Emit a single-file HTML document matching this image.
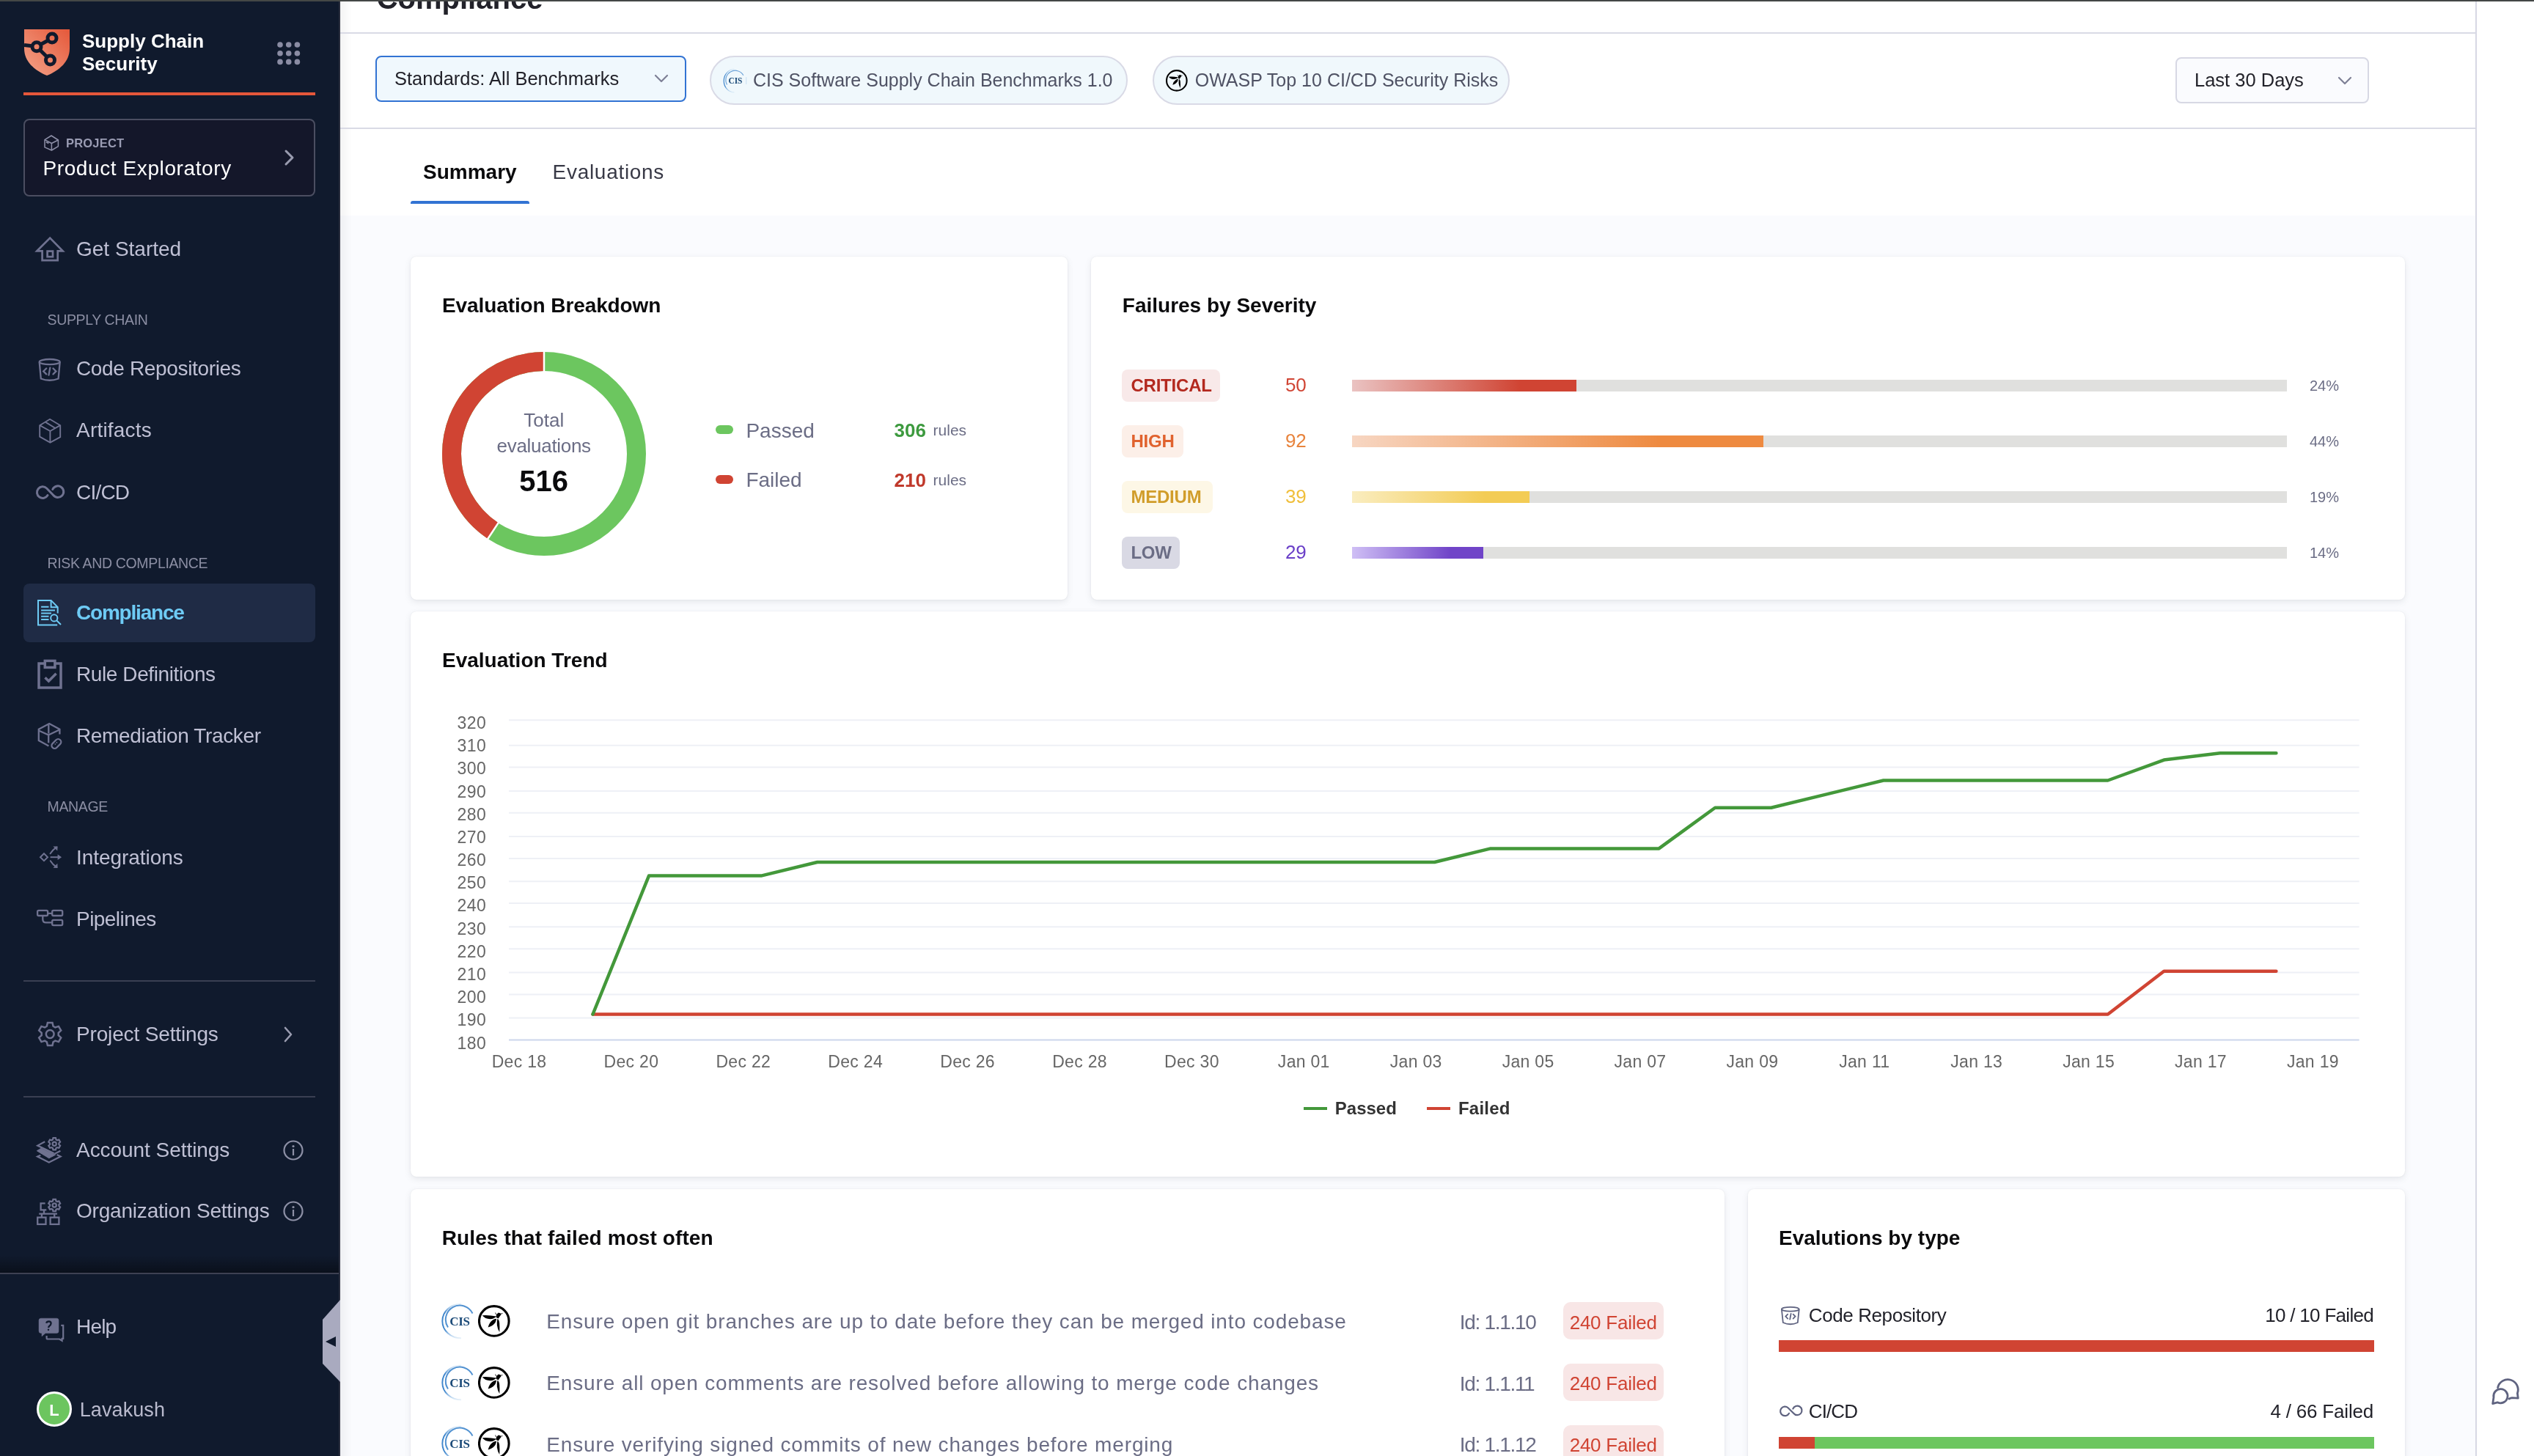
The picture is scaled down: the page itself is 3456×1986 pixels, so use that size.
<!DOCTYPE html>
<html><head><meta charset="utf-8"><title>Compliance</title>
<style>
html,body{margin:0;padding:0;}
body{width:3456px;height:1986px;overflow:hidden;position:relative;background:#ffffff;font-family:"Liberation Sans", sans-serif;}
#root{position:absolute;left:0;top:0;width:3456px;height:1986px;overflow:hidden;will-change:transform;}
</style></head><body><div id="root">
<div style="position:absolute;left:0px;top:0px;width:462px;height:1986px;background:#101a2d;"></div>
<div style="position:absolute;left:462px;top:0px;width:2px;height:1986px;background:#2a2e3e;"></div>
<svg style="position:absolute;left:33px;top:40px;" width="62" height="63" viewBox="0 0 62 63">
<defs><linearGradient id="lg" x1="1" y1="0" x2="0" y2="1">
<stop offset="0" stop-color="#e5583a"/><stop offset="1" stop-color="#f3a48a"/></linearGradient></defs>
<path d="M0 0 H62 V26 C62 44 48 56 31 63 C14 56 0 44 0 26 Z" fill="url(#lg)"/>
<g fill="none" stroke="#101a2d" stroke-width="5">
<circle cx="38" cy="12" r="6"/><circle cx="17" cy="23.7" r="6"/><circle cx="35.5" cy="42" r="6"/>
<line x1="32.8" y1="15" x2="22.2" y2="20.8"/><line x1="21.3" y1="28" x2="31" y2="37.5"/><line x1="0" y1="21.5" x2="11" y2="22.8"/>
</g></svg>
<div style="position:absolute;top:42.99px;font-size:26px;line-height:26px;color:#ffffff;font-weight:700;white-space:nowrap;font-family:'Liberation Sans', sans-serif;left:112px;">Supply Chain</div>
<div style="position:absolute;top:73.99px;font-size:26px;line-height:26px;color:#ffffff;font-weight:700;white-space:nowrap;font-family:'Liberation Sans', sans-serif;left:112px;">Security</div>
<svg style="position:absolute;left:378px;top:57px;" width="32" height="32" viewBox="0 0 32 32"><circle cx="4.0" cy="4.0" r="3.8" fill="#8a8ca3"/><circle cx="4.0" cy="15.7" r="3.8" fill="#8a8ca3"/><circle cx="4.0" cy="27.4" r="3.8" fill="#8a8ca3"/><circle cx="15.7" cy="4.0" r="3.8" fill="#8a8ca3"/><circle cx="15.7" cy="15.7" r="3.8" fill="#8a8ca3"/><circle cx="15.7" cy="27.4" r="3.8" fill="#8a8ca3"/><circle cx="27.4" cy="4.0" r="3.8" fill="#8a8ca3"/><circle cx="27.4" cy="15.7" r="3.8" fill="#8a8ca3"/><circle cx="27.4" cy="27.4" r="3.8" fill="#8a8ca3"/></svg>
<div style="position:absolute;left:32px;top:126px;width:398px;height:4px;background:#e5573a;"></div>
<div style="position:absolute;left:32px;top:162px;width:398px;height:106px;box-sizing:border-box;border:2px solid #4b4e61;border-radius:8px;background:#14172a;"></div>
<svg style="position:absolute;left:60px;top:184px;" width="22" height="23" viewBox="0 0 22 23"><g fill="none" stroke="#8e90a8" stroke-width="1.5" stroke-linejoin="round"><path d="M10 1 L19.4 7 V15.6 L10.4 21 L1 16.9 V6.6 Z"/><path d="M1 6.6 L10.4 11.5 L19.4 7 M10.4 11.5 V21"/><path d="M2.9 9.75 L6.4 11.4" stroke-width="1.8"/></g></svg>
<div style="position:absolute;top:187.03px;font-size:16.5px;line-height:16.5px;color:#9a9cb3;font-weight:700;white-space:nowrap;font-family:'Liberation Sans', sans-serif;letter-spacing:0.2px;left:90px;">PROJECT</div>
<div style="position:absolute;top:215.50px;font-size:28px;line-height:28px;color:#ffffff;font-weight:400;white-space:nowrap;font-family:'Liberation Sans', sans-serif;letter-spacing:0.6px;left:58.5px;">Product Exploratory</div>
<svg style="position:absolute;left:386px;top:203px;" width="18" height="24" viewBox="0 0 18 24"><path d="M4 3 L13 12 L4 21" fill="none" stroke="#9a9cb0" stroke-width="3" stroke-linecap="round" stroke-linejoin="round"/></svg>
<div style="position:absolute;top:325.80px;font-size:28px;line-height:28px;color:#bfc0d4;font-weight:400;white-space:nowrap;font-family:'Liberation Sans', sans-serif;left:104px;">Get Started</div>
<div style="position:absolute;top:427.49px;font-size:19.5px;line-height:19.5px;color:#8b8ea3;font-weight:400;white-space:nowrap;font-family:'Liberation Sans', sans-serif;letter-spacing:-0.35px;left:64.5px;">SUPPLY CHAIN</div>
<div style="position:absolute;top:489.30px;font-size:28px;line-height:28px;color:#bfc0d4;font-weight:400;white-space:nowrap;font-family:'Liberation Sans', sans-serif;letter-spacing:-0.35px;left:104px;">Code Repositories</div>
<div style="position:absolute;top:573.30px;font-size:28px;line-height:28px;color:#bfc0d4;font-weight:400;white-space:nowrap;font-family:'Liberation Sans', sans-serif;letter-spacing:0.2px;left:104px;">Artifacts</div>
<div style="position:absolute;top:658.30px;font-size:28px;line-height:28px;color:#bfc0d4;font-weight:400;white-space:nowrap;font-family:'Liberation Sans', sans-serif;letter-spacing:-0.8px;left:104px;">CI/CD</div>
<div style="position:absolute;top:759.49px;font-size:19.5px;line-height:19.5px;color:#8b8ea3;font-weight:400;white-space:nowrap;font-family:'Liberation Sans', sans-serif;letter-spacing:-0.35px;left:64.5px;">RISK AND COMPLIANCE</div>
<div style="position:absolute;left:32px;top:796px;width:398px;height:80px;background:#1f2b45;border-radius:8px;"></div>
<div style="position:absolute;top:822.30px;font-size:28px;line-height:28px;color:#6ecbf5;font-weight:700;white-space:nowrap;font-family:'Liberation Sans', sans-serif;letter-spacing:-1.2px;left:104px;">Compliance</div>
<div style="position:absolute;top:906.30px;font-size:28px;line-height:28px;color:#bfc0d4;font-weight:400;white-space:nowrap;font-family:'Liberation Sans', sans-serif;letter-spacing:-0.4px;left:104px;">Rule Definitions</div>
<div style="position:absolute;top:990.30px;font-size:28px;line-height:28px;color:#bfc0d4;font-weight:400;white-space:nowrap;font-family:'Liberation Sans', sans-serif;letter-spacing:-0.35px;left:104px;">Remediation Tracker</div>
<div style="position:absolute;top:1091.49px;font-size:19.5px;line-height:19.5px;color:#8b8ea3;font-weight:400;white-space:nowrap;font-family:'Liberation Sans', sans-serif;letter-spacing:-0.35px;left:64.5px;">MANAGE</div>
<div style="position:absolute;top:1155.80px;font-size:28px;line-height:28px;color:#bfc0d4;font-weight:400;white-space:nowrap;font-family:'Liberation Sans', sans-serif;letter-spacing:-0.05px;left:104px;">Integrations</div>
<div style="position:absolute;top:1239.90px;font-size:28px;line-height:28px;color:#bfc0d4;font-weight:400;white-space:nowrap;font-family:'Liberation Sans', sans-serif;letter-spacing:-0.55px;left:104px;">Pipelines</div>
<div style="position:absolute;left:32px;top:1337px;width:398px;height:2px;background:#3a3f52;"></div>
<div style="position:absolute;top:1397.30px;font-size:28px;line-height:28px;color:#bfc0d4;font-weight:400;white-space:nowrap;font-family:'Liberation Sans', sans-serif;letter-spacing:-0.15px;left:104px;">Project Settings</div>
<svg style="position:absolute;left:384px;top:1398px;" width="18" height="26" viewBox="0 0 18 26"><path d="M5 4 L13 13 L5 22" fill="none" stroke="#9a9cb0" stroke-width="2.6" stroke-linecap="round" stroke-linejoin="round"/></svg>
<div style="position:absolute;left:32px;top:1495px;width:398px;height:2px;background:#3a3f52;"></div>
<div style="position:absolute;top:1555.30px;font-size:28px;line-height:28px;color:#bfc0d4;font-weight:400;white-space:nowrap;font-family:'Liberation Sans', sans-serif;letter-spacing:-0.05px;left:104px;">Account Settings</div>
<div style="position:absolute;top:1638.30px;font-size:28px;line-height:28px;color:#bfc0d4;font-weight:400;white-space:nowrap;font-family:'Liberation Sans', sans-serif;letter-spacing:-0.2px;left:104px;">Organization Settings</div>
<svg style="position:absolute;left:385px;top:1554px;" width="30" height="30" viewBox="0 0 30 30"><circle cx="15" cy="15" r="12.5" fill="none" stroke="#8d90a6" stroke-width="2.2"/><circle cx="15" cy="9.5" r="1.6" fill="#8d90a6"/><rect x="13.9" y="13" width="2.2" height="9" fill="#8d90a6"/></svg>
<svg style="position:absolute;left:385px;top:1637px;" width="30" height="30" viewBox="0 0 30 30"><circle cx="15" cy="15" r="12.5" fill="none" stroke="#8d90a6" stroke-width="2.2"/><circle cx="15" cy="9.5" r="1.6" fill="#8d90a6"/><rect x="13.9" y="13" width="2.2" height="9" fill="#8d90a6"/></svg>
<div style="position:absolute;left:0px;top:1712px;width:462px;height:24px;background:linear-gradient(180deg,rgba(0,0,0,0),rgba(0,0,0,0.4));"></div>
<div style="position:absolute;left:0px;top:1736px;width:462px;height:2px;background:#3d4152;"></div>
<div style="position:absolute;top:1795.80px;font-size:28px;line-height:28px;color:#bfc0d4;font-weight:400;white-space:nowrap;font-family:'Liberation Sans', sans-serif;letter-spacing:-0.8px;left:104px;">Help</div>
<div style="position:absolute;left:50px;top:1898px;width:48px;height:48px;box-sizing:border-box;border:3.5px solid #ffffff;border-radius:50%;background:#6cc55f;"></div>
<div style="position:absolute;top:1913.38px;font-size:22px;line-height:22px;color:#ffffff;font-weight:700;white-space:nowrap;font-family:'Liberation Sans', sans-serif;left:-926px;width:2000px;text-align:center;">L</div>
<div style="position:absolute;top:1909.64px;font-size:27px;line-height:27px;color:#b9bacd;font-weight:400;white-space:nowrap;font-family:'Liberation Sans', sans-serif;letter-spacing:0.1px;left:108.7px;">Lavakush</div>
<svg style="position:absolute;left:440px;top:1773px;" width="24" height="112" viewBox="0 0 24 112"><path d="M24 0 L0 27 V87 L24 112 Z" fill="#a9aabf"/><path d="M4 57 L18 50 V64 Z" fill="#101a2d"/></svg>
<svg style="position:absolute;left:40px;top:310px;" width="60" height="60" viewBox="0 0 60 60"><g fill="none" stroke="#6f7290" stroke-width="2.7" stroke-linejoin="miter" stroke-linecap="butt"><path d="M10.5 32.3 L28.2 14.6 L45.6 32.3 H38.7 V45.2 H17.6 V32.3 Z"/><rect x="24.6" y="32.6" width="7.4" height="7.6"/></g></svg>
<svg style="position:absolute;left:40px;top:475px;" width="60" height="60" viewBox="0 0 60 60"><g fill="none" stroke="#6f7290" stroke-width="2.3" stroke-linejoin="miter" stroke-linecap="butt"><ellipse cx="27.7" cy="18.6" rx="14" ry="3.6"/><path d="M13.7 18.8 L15.8 41.5 Q27.6 46 39.6 41.5 L41.7 18.8"/><path d="M23.2 27.5 L19.2 31.4 L23.2 35.4 M32.5 27.5 L36.4 31.4 L32.5 35.4 M28.3 26.6 L26.5 36.6" stroke-linecap="round"/></g></svg>
<svg style="position:absolute;left:40px;top:560px;" width="60" height="60" viewBox="0 0 60 60"><g fill="none" stroke="#6f7290" stroke-width="1.9" stroke-linejoin="miter" stroke-linecap="butt"><path d="M28 11.8 L42.2 20.2 V36.2 L28.4 43.6 L14.2 35.6 V20.2 Z"/><path d="M14.2 20.2 L28.4 28 L42.2 20.2 M28.4 28 V43.6 M22.2 15.9 L35.8 24.3"/></g></svg>
<svg style="position:absolute;left:40px;top:645px;" width="60" height="60" viewBox="0 0 60 60"><g fill="none" stroke="#6f7290" stroke-width="3" stroke-linejoin="miter" stroke-linecap="butt"><path d="M25 30.5 A7.8 7.8 0 1 1 23.6 21 L32.8 30.5 A7.8 7.8 0 1 0 31.8 22.5" stroke-linecap="round"/></g></svg>
<svg style="position:absolute;left:40px;top:800px;" width="60" height="60" viewBox="0 0 60 60"><g fill="none" stroke="#6ecbf5" stroke-width="2" stroke-linejoin="miter" stroke-linecap="butt"><path d="M38.2 52.6 H12 V18.9 H29.6 L38.7 28.2 V36.6"/><path d="M29.6 18.9 V28.2 H38.7"/><path d="M16.1 27.8 H26.5 M16.1 32.5 H35 M16.1 36.6 H30 M16.1 40.7 H26.5 M16.1 45.1 H26.5"/><circle cx="33.8" cy="42.9" r="4.6"/><path d="M37.2 46.3 L43 52"/></g></svg>
<svg style="position:absolute;left:40px;top:895px;" width="60" height="60" viewBox="0 0 60 60"><g fill="none" stroke="#6f7290" stroke-width="3.5" stroke-linejoin="miter" stroke-linecap="butt"><path d="M20 10 H13 V43 H43 V10 H36"/><rect x="21.3" y="6.4" width="13.6" height="9"/><path d="M21.5 29.2 L26.4 34 L36.6 23.8"/></g></svg>
<svg style="position:absolute;left:40px;top:975px;" width="60" height="60" viewBox="0 0 60 60"><g fill="none" stroke="#6f7290" stroke-width="2.3" stroke-linejoin="miter" stroke-linecap="butt"><path d="M26.4 42.4 L12.8 35 V19.8 L27.2 12 L41.4 19.8 V26.5"/><path d="M12.8 21.5 L26.2 27.6 L41.4 20.2 M26.3 13.2 V25.6 M26.2 27.6 V38.2"/><rect x="29.5" y="35.5" width="14.8" height="8" rx="4" transform="rotate(-45 36.9 39.5)"/><path d="M34.8 40.5 L35.8 39.5 M36.9 38.4 L37.9 37.4" stroke-width="1.6"/></g></svg>
<svg style="position:absolute;left:40px;top:1140px;" width="60" height="60" viewBox="0 0 60 60"><g fill="none" stroke="#6f7290" stroke-width="2" stroke-linejoin="miter" stroke-linecap="butt"><path d="M20 24.2 L25 29.2 L20 34.2 L15 29.2 Z"/><path d="M28.6 29.2 H41" /><path d="M28.6 24.3 Q32 19 37 15.6 M28.8 34.2 Q32 39.5 37 42.6" stroke-linecap="round"/></g></svg>
<svg style="position:absolute;left:40px;top:1140px;" width="60" height="60" viewBox="0 0 60 60"><g fill="#6f7290" stroke="#6f7290" stroke-width="1.2" stroke-linejoin="miter" stroke-linecap="butt"><path d="M39.2 26.6 L43 29.2 L39.2 31.8 Z M33.8 15.1 L38 15 L37.7 19.1 Z M33.8 43.2 L38 43.4 L37.8 39.1 Z"/></g></svg>
<svg style="position:absolute;left:40px;top:1225px;" width="60" height="60" viewBox="0 0 60 60"><g fill="none" stroke="#6f7290" stroke-width="2.3" stroke-linejoin="miter" stroke-linecap="butt"><rect x="11.1" y="16.8" width="14" height="7.2" rx="1.6"/><rect x="31.2" y="16.8" width="14" height="7.2" rx="1.6"/><rect x="31.2" y="29.9" width="14" height="7.2" rx="1.6"/><path d="M25.1 20.8 H31.2 M18.3 24 V29 Q18.3 33.4 22.7 33.4 H31.2"/></g></svg>
<svg style="position:absolute;left:40px;top:1380px;" width="60" height="60" viewBox="0 0 60 60"><g fill="none" stroke="#6f7290" stroke-width="2.5" stroke-linejoin="miter" stroke-linecap="butt"><path d="M23.85 19.74 L24.91 15.05 L31.49 15.05 L32.55 19.74 L35.34 21.36 L39.94 19.93 L43.23 25.62 L39.69 28.89 L39.69 32.11 L43.23 35.38 L39.94 41.07 L35.34 39.64 L32.55 41.26 L31.49 45.95 L24.91 45.95 L23.85 41.26 L21.06 39.64 L16.46 41.07 L13.17 35.38 L16.71 32.11 L16.71 28.89 L13.17 25.62 L16.46 19.93 L21.06 21.36 Z"/><circle cx="28.2" cy="30.5" r="5.4"/></g></svg>
<svg style="position:absolute;left:40px;top:1540px;" width="60" height="60" viewBox="0 0 60 60"><g fill="none" stroke="#6f7290" stroke-width="2.2" stroke-linejoin="miter" stroke-linecap="butt"><path d="M21.4 17.3 L10.8 22.7 L26.8 30.3 L42.5 22.4" stroke="none"/><path d="M21.2 17.2 L11.2 22.6 L33.8 33.2"/><path d="M42.4 29.7 L34.2 34"/><path d="M15.3 35.7 L11 37.6 L26.8 45.6 L42.6 37.6 L37.6 35.1"/><path d="M31.88 14.45 L32.47 12.08 L35.93 12.08 L36.52 14.45 L38.02 15.31 L40.37 14.65 L42.09 17.64 L40.34 19.34 L40.34 21.06 L42.09 22.76 L40.37 25.75 L38.02 25.09 L36.52 25.95 L35.93 28.32 L32.47 28.32 L31.88 25.95 L30.38 25.09 L28.03 25.75 L26.31 22.76 L28.06 21.06 L28.06 19.34 L26.31 17.64 L28.03 14.65 L30.38 15.31 Z"/><circle cx="34.2" cy="20.2" r="2.6"/></g></svg>
<svg style="position:absolute;left:40px;top:1540px;" width="60" height="60" viewBox="0 0 60 60"><g fill="#6f7290" stroke="#6f7290" stroke-width="1" stroke-linejoin="miter" stroke-linecap="butt"><path d="M10.3 29.7 L16 26.4 L35.6 35.2 L26.8 39.8 Z"/></g></svg>
<svg style="position:absolute;left:40px;top:1625px;" width="60" height="60" viewBox="0 0 60 60"><g fill="none" stroke="#6f7290" stroke-width="2.3" stroke-linejoin="miter" stroke-linecap="butt"><path d="M21.6 16.3 H15.6 V25.3 H23.3 M20 25.3 V30.7 M13.2 30.7 H38 M16.9 30.7 V35.6 M34.2 30.7 V35.6"/><rect x="11.2" y="35.6" width="11.3" height="9.3"/><rect x="28.6" y="35.6" width="11.8" height="9.3"/><path d="M31.88 13.25 L32.47 10.88 L35.93 10.88 L36.52 13.25 L38.02 14.11 L40.37 13.45 L42.09 16.44 L40.34 18.14 L40.34 19.86 L42.09 21.56 L40.37 24.55 L38.02 23.89 L36.52 24.75 L35.93 27.12 L32.47 27.12 L31.88 24.75 L30.38 23.89 L28.03 24.55 L26.31 21.56 L28.06 19.86 L28.06 18.14 L26.31 16.44 L28.03 13.45 L30.38 14.11 Z"/><circle cx="34.2" cy="19" r="2.6"/></g></svg>
<svg style="position:absolute;left:40px;top:1785px;" width="60" height="60" viewBox="0 0 60 60"><g fill="#6f7290" stroke="#6f7290" stroke-width="0.5" stroke-linejoin="miter" stroke-linecap="butt"><path d="M16 13.2 H37.4 Q40 13.2 40 15.8 V30.8 Q40 33.4 37.4 33.4 H22 L17 37.8 V33.4 H16 Q13 33.4 13 30.4 V16 Q13 13.2 16 13.2 Z"/></g></svg>
<svg style="position:absolute;left:40px;top:1785px;" width="60" height="60" viewBox="0 0 60 60"><g fill="none" stroke="#101a2d" stroke-width="2.3" stroke-linejoin="miter" stroke-linecap="butt"><path d="M23.2 19.8 Q23.8 17.4 26.6 17.4 Q29.6 17.6 29.6 20.2 Q29.4 22.2 27.4 23.6 Q26.2 24.6 26.2 26" fill="none" stroke-width="2.3"/><circle cx="26" cy="28.8" r="1.2" fill="#101a2d" stroke="none"/></g></svg>
<svg style="position:absolute;left:40px;top:1785px;" width="60" height="60" viewBox="0 0 60 60"><g fill="none" stroke="#6f7290" stroke-width="2.2" stroke-linejoin="miter" stroke-linecap="butt"><path d="M43.3 22.9 H46.2 V40.8 H44.6 V43.8 L41 41.5 H25 Q23.6 41.5 23.6 40 V37" /></g></svg>
<div style="position:absolute;left:464px;top:0px;width:2912px;height:294px;background:#ffffff;"></div>
<div style="position:absolute;left:464px;top:294px;width:2912px;height:1692px;background:#fafbfe;"></div>
<div style="position:absolute;left:464px;top:0px;width:16px;height:1986px;background:linear-gradient(90deg,rgba(0,0,0,0.045),rgba(0,0,0,0));"></div>
<div style="position:absolute;left:3376px;top:0px;width:2px;height:1986px;background:#d7d8e4;"></div>
<div style="position:absolute;left:3378px;top:0px;width:78px;height:1986px;background:#ffffff;"></div>
<div style="position:absolute;top:-22.16px;font-size:40px;line-height:40px;color:#22222a;font-weight:700;white-space:nowrap;font-family:'Liberation Sans', sans-serif;left:513.7px;">Compliance</div>
<div style="position:absolute;left:464px;top:44px;width:2912px;height:2px;background:#d9dae5;"></div>
<div style="position:absolute;left:464px;top:174px;width:2912px;height:2px;background:#d9dae5;"></div>
<div style="position:absolute;left:512px;top:76px;width:424px;height:63px;box-sizing:border-box;border:2px solid #3273d3;border-radius:8px;background:#f0f8fd;"></div>
<div style="position:absolute;top:95.41px;font-size:25.5px;line-height:25.5px;color:#22222a;font-weight:400;white-space:nowrap;font-family:'Liberation Sans', sans-serif;left:538px;">Standards: All Benchmarks</div>
<svg style="position:absolute;left:890px;top:98px;" width="24" height="18" viewBox="0 0 24 18"><path d="M4 5 L12 13 L20 5" fill="none" stroke="#7d7f95" stroke-width="2.2" stroke-linecap="round" stroke-linejoin="round"/></svg>
<div style="position:absolute;left:968px;top:76px;width:570px;height:67px;box-sizing:border-box;border:2px solid #d9dae6;border-radius:34px;background:#f0f8fc;"></div>
<svg style="position:absolute;left:984px;top:93.5px;overflow:visible" width="32.8" height="32.8" viewBox="0 0 50 50"><defs>
<linearGradient id="cg98493" x1="0" y1="0" x2="0" y2="1">
<stop offset="0" stop-color="#7fb3e3" stop-opacity="0.2"/><stop offset="0.25" stop-color="#3f86cc"/><stop offset="0.75" stop-color="#3f86cc"/><stop offset="1" stop-color="#7fb3e3" stop-opacity="0.2"/></linearGradient></defs>
<path d="M26.5 0.6 A21.6 24.1 0 0 0 26.5 48.8" fill="none" stroke="url(#cg98493)" stroke-width="1.8"/><path d="M45.5 13.3 A18.4 18.4 0 1 0 11.5 32.7" fill="none" stroke="#3f86cc" stroke-width="1.8" stroke-opacity="0.75"/><path d="M51.5 17 V32" stroke="#9cc4ea" stroke-width="1.2" stroke-opacity="0.6"/><text x="14.6" y="30.8" font-family="Liberation Serif, serif" font-weight="700" font-size="17.5" fill="#1b4a78" letter-spacing="-0.2">CIS</text></svg>
<div style="position:absolute;top:97.24px;font-size:25px;line-height:25px;color:#4f5264;font-weight:400;white-space:nowrap;font-family:'Liberation Sans', sans-serif;left:1027px;">CIS Software Supply Chain Benchmarks 1.0</div>
<div style="position:absolute;left:1571.5px;top:76px;width:487.5px;height:67px;box-sizing:border-box;border:2px solid #d9dae6;border-radius:34px;background:#f0f8fc;"></div>
<svg style="position:absolute;left:1590px;top:95px" width="29.9" height="29.9" viewBox="0 0 44 44"><circle cx="21.8" cy="21.9" r="20.3" fill="none" stroke="#000" stroke-width="3.1"/>
<path d="M5.8 14.2 Q15 13.6 25 15.6 Q22 19.2 16.5 19.2 Q9.5 19 5.8 14.2 Z" fill="#000"/>
<path d="M13.6 30.4 Q15.5 23.5 20 20.6 Q23 18.6 25 18.9 Q24.5 24 20.5 27.2 Q17 30 13.6 30.4 Z" fill="#000"/>
<path d="M26.4 18.8 Q28.6 19.5 29.2 25 Q29.6 31 29.3 37 Q26.6 33 25.9 27.5 Q25.6 22 26.4 18.8 Z" fill="#000"/>
<path d="M24.5 16.8 L25 13 L27.8 10.4 L30.5 11.2 L31.6 13 L29.6 15.4 L27.6 18.6 Z" fill="#000"/>
<path d="M24.5 13 L23.6 10.5 M31 12 L33.5 11.6" stroke="#000" stroke-width="0.8"/></svg>
<div style="position:absolute;top:97.24px;font-size:25px;line-height:25px;color:#4f5264;font-weight:400;white-space:nowrap;font-family:'Liberation Sans', sans-serif;left:1629.7px;">OWASP Top 10 CI/CD Security Risks</div>
<div style="position:absolute;left:2967px;top:78px;width:264px;height:63px;box-sizing:border-box;border:2px solid #d7d8e4;border-radius:8px;background:#fafbfe;"></div>
<div style="position:absolute;top:97.01px;font-size:25.5px;line-height:25.5px;color:#22222a;font-weight:400;white-space:nowrap;font-family:'Liberation Sans', sans-serif;left:2993px;">Last 30 Days</div>
<svg style="position:absolute;left:3186px;top:101px;" width="24" height="18" viewBox="0 0 24 18"><path d="M4 5 L12 13 L20 5" fill="none" stroke="#7d7f95" stroke-width="2.2" stroke-linecap="round" stroke-linejoin="round"/></svg>
<div style="position:absolute;top:221.00px;font-size:28px;line-height:28px;color:#0b0b0d;font-weight:700;white-space:nowrap;font-family:'Liberation Sans', sans-serif;left:577px;">Summary</div>
<div style="position:absolute;top:221.00px;font-size:28px;line-height:28px;color:#383946;font-weight:400;white-space:nowrap;font-family:'Liberation Sans', sans-serif;letter-spacing:0.7px;left:753.6px;">Evaluations</div>
<div style="position:absolute;left:560px;top:274px;width:162px;height:4px;background:#3273d3;border-radius:3px 3px 0 0;"></div>
<div style="position:absolute;left:560px;top:350px;width:896px;height:468px;background:#ffffff;border-radius:8px;box-shadow:0 0 1.5px rgba(40,41,61,0.10),0 3px 9px rgba(96,97,112,0.13);"></div>
<div style="position:absolute;left:1488px;top:350px;width:1792px;height:468px;background:#ffffff;border-radius:8px;box-shadow:0 0 1.5px rgba(40,41,61,0.10),0 3px 9px rgba(96,97,112,0.13);"></div>
<div style="position:absolute;left:560px;top:834px;width:2720px;height:771px;background:#ffffff;border-radius:8px;box-shadow:0 0 1.5px rgba(40,41,61,0.10),0 3px 9px rgba(96,97,112,0.13);"></div>
<div style="position:absolute;left:560px;top:1622px;width:1792px;height:500px;background:#ffffff;border-radius:8px;box-shadow:0 0 1.5px rgba(40,41,61,0.10),0 3px 9px rgba(96,97,112,0.13);"></div>
<div style="position:absolute;left:2384px;top:1622px;width:896px;height:500px;background:#ffffff;border-radius:8px;box-shadow:0 0 1.5px rgba(40,41,61,0.10),0 3px 9px rgba(96,97,112,0.13);"></div>
<div style="position:absolute;top:403.30px;font-size:28px;line-height:28px;color:#0b0b0d;font-weight:700;white-space:nowrap;font-family:'Liberation Sans', sans-serif;letter-spacing:-0.1px;left:603px;">Evaluation Breakdown</div>
<svg style="position:absolute;left:601.7px;top:479px" width="280" height="280" viewBox="0 0 280 280">
<g transform="rotate(-90 140 140)">
<circle cx="140" cy="140" r="126" fill="none" stroke="#6cc65f" stroke-width="26"/>
<circle cx="140" cy="140" r="126" fill="none" stroke="#d04433" stroke-width="26" stroke-dasharray="322.20 791.68" transform="scale(1,-1) translate(0,-280)"/>
</g>
<line x1="140" y1="0" x2="140" y2="28" stroke="#fff" stroke-width="2.5"/>
<line x1="140" y1="140" x2="62.75" y2="256.76" stroke="#fff" stroke-width="2.5" stroke-dasharray="0 112 30"/>
</svg>
<div style="position:absolute;top:559.99px;font-size:26px;line-height:26px;color:#6b6d85;font-weight:400;white-space:nowrap;font-family:'Liberation Sans', sans-serif;left:-258.29999999999995px;width:2000px;text-align:center;">Total</div>
<div style="position:absolute;top:595.49px;font-size:26px;line-height:26px;color:#6b6d85;font-weight:400;white-space:nowrap;font-family:'Liberation Sans', sans-serif;letter-spacing:-0.3px;left:-258.29999999999995px;width:2000px;text-align:center;">evaluations</div>
<div style="position:absolute;top:635.64px;font-size:40px;line-height:40px;color:#0b0b0d;font-weight:700;white-space:nowrap;font-family:'Liberation Sans', sans-serif;left:-258.29999999999995px;width:2000px;text-align:center;">516</div>
<div style="position:absolute;left:976px;top:580px;width:24px;height:12px;background:#6cc65f;border-radius:6px;"></div>
<div style="position:absolute;left:976px;top:648px;width:24px;height:12px;background:#d04433;border-radius:6px;"></div>
<div style="position:absolute;top:573.50px;font-size:28px;line-height:28px;color:#6b6d85;font-weight:400;white-space:nowrap;font-family:'Liberation Sans', sans-serif;left:1017.4px;">Passed</div>
<div style="position:absolute;top:641.10px;font-size:28px;line-height:28px;color:#6b6d85;font-weight:400;white-space:nowrap;font-family:'Liberation Sans', sans-serif;left:1017.4px;">Failed</div>
<div style="position:absolute;top:574.39px;font-size:26px;line-height:26px;color:#3d9a3f;font-weight:700;white-space:nowrap;font-family:'Liberation Sans', sans-serif;right:2193px;text-align:right;">306</div>
<div style="position:absolute;top:641.99px;font-size:26px;line-height:26px;color:#c0392b;font-weight:700;white-space:nowrap;font-family:'Liberation Sans', sans-serif;right:2193px;text-align:right;">210</div>
<div style="position:absolute;top:576.22px;font-size:21px;line-height:21px;color:#6b6d85;font-weight:400;white-space:nowrap;font-family:'Liberation Sans', sans-serif;left:1272.6px;">rules</div>
<div style="position:absolute;top:643.82px;font-size:21px;line-height:21px;color:#6b6d85;font-weight:400;white-space:nowrap;font-family:'Liberation Sans', sans-serif;left:1272.6px;">rules</div>
<div style="position:absolute;top:403.30px;font-size:28px;line-height:28px;color:#0b0b0d;font-weight:700;white-space:nowrap;font-family:'Liberation Sans', sans-serif;left:1530.8px;">Failures by Severity</div>
<div style="position:absolute;left:1530px;top:504px;width:134.4px;height:44px;background:#f8e9e9;border-radius:8px;"></div>
<div style="position:absolute;top:514.18px;font-size:24px;line-height:24px;color:#b3291f;font-weight:700;white-space:nowrap;font-family:'Liberation Sans', sans-serif;letter-spacing:-0.2px;left:1542.4px;">CRITICAL</div>
<div style="position:absolute;top:512.49px;font-size:26px;line-height:26px;color:#d04433;font-weight:400;white-space:nowrap;font-family:'Liberation Sans', sans-serif;letter-spacing:-0.3px;left:1753px;">50</div>
<div style="position:absolute;left:1844px;top:518px;width:1275px;height:16px;background:#e0e0de;"></div>
<div style="position:absolute;left:1844px;top:518px;width:306px;height:16px;background:linear-gradient(90deg,#eac3c2,#d04433 75%,#d04433);"></div>
<div style="position:absolute;top:516.07px;font-size:20px;line-height:20px;color:#6b6d85;font-weight:400;white-space:nowrap;font-family:'Liberation Sans', sans-serif;left:3150px;">24%</div>
<div style="position:absolute;left:1530px;top:580px;width:83.6px;height:44px;background:#fcefe8;border-radius:8px;"></div>
<div style="position:absolute;top:590.18px;font-size:24px;line-height:24px;color:#e0622e;font-weight:700;white-space:nowrap;font-family:'Liberation Sans', sans-serif;letter-spacing:-0.2px;left:1542.4px;">HIGH</div>
<div style="position:absolute;top:588.49px;font-size:26px;line-height:26px;color:#e8843d;font-weight:400;white-space:nowrap;font-family:'Liberation Sans', sans-serif;letter-spacing:-0.3px;left:1753px;">92</div>
<div style="position:absolute;left:1844px;top:594px;width:1275px;height:16px;background:#e0e0de;"></div>
<div style="position:absolute;left:1844px;top:594px;width:561px;height:16px;background:linear-gradient(90deg,#f7d6c2,#ee8a40 75%,#ee8a40);"></div>
<div style="position:absolute;top:592.07px;font-size:20px;line-height:20px;color:#6b6d85;font-weight:400;white-space:nowrap;font-family:'Liberation Sans', sans-serif;left:3150px;">44%</div>
<div style="position:absolute;left:1530px;top:656px;width:123.5px;height:44px;background:#fdf7e6;border-radius:8px;"></div>
<div style="position:absolute;top:666.18px;font-size:24px;line-height:24px;color:#d19d2b;font-weight:700;white-space:nowrap;font-family:'Liberation Sans', sans-serif;letter-spacing:-0.2px;left:1542.4px;">MEDIUM</div>
<div style="position:absolute;top:664.49px;font-size:26px;line-height:26px;color:#f0bf3c;font-weight:400;white-space:nowrap;font-family:'Liberation Sans', sans-serif;letter-spacing:-0.3px;left:1753px;">39</div>
<div style="position:absolute;left:1844px;top:670px;width:1275px;height:16px;background:#e0e0de;"></div>
<div style="position:absolute;left:1844px;top:670px;width:242px;height:16px;background:linear-gradient(90deg,#faedc0,#f3cc55 75%,#f3cc55);"></div>
<div style="position:absolute;top:668.07px;font-size:20px;line-height:20px;color:#6b6d85;font-weight:400;white-space:nowrap;font-family:'Liberation Sans', sans-serif;left:3150px;">19%</div>
<div style="position:absolute;left:1530px;top:732px;width:79px;height:44px;background:#d9d9e4;border-radius:8px;"></div>
<div style="position:absolute;top:742.18px;font-size:24px;line-height:24px;color:#6b6d85;font-weight:700;white-space:nowrap;font-family:'Liberation Sans', sans-serif;letter-spacing:-0.2px;left:1542.4px;">LOW</div>
<div style="position:absolute;top:740.49px;font-size:26px;line-height:26px;color:#6a3fc8;font-weight:400;white-space:nowrap;font-family:'Liberation Sans', sans-serif;letter-spacing:-0.3px;left:1753px;">29</div>
<div style="position:absolute;left:1844px;top:746px;width:1275px;height:16px;background:#e0e0de;"></div>
<div style="position:absolute;left:1844px;top:746px;width:179px;height:16px;background:linear-gradient(90deg,#cfbff5,#7044c8 75%,#7044c8);"></div>
<div style="position:absolute;top:744.07px;font-size:20px;line-height:20px;color:#6b6d85;font-weight:400;white-space:nowrap;font-family:'Liberation Sans', sans-serif;left:3150px;">14%</div>
<div style="position:absolute;top:886.80px;font-size:28px;line-height:28px;color:#0b0b0d;font-weight:700;white-space:nowrap;font-family:'Liberation Sans', sans-serif;left:603px;">Evaluation Trend</div>
<svg style="position:absolute;left:0;top:0" width="3456" height="1986" viewBox="0 0 3456 1986"><line x1="694" y1="1418.5" x2="3217.6" y2="1418.5" stroke="#ccd6eb" stroke-width="2"/><line x1="694" y1="1388.6" x2="3217.6" y2="1388.6" stroke="#eef0f6" stroke-width="2"/><line x1="694" y1="1356.4" x2="3217.6" y2="1356.4" stroke="#eef0f6" stroke-width="2"/><line x1="694" y1="1326.4" x2="3217.6" y2="1326.4" stroke="#eef0f6" stroke-width="2"/><line x1="694" y1="1294.2" x2="3217.6" y2="1294.2" stroke="#eef0f6" stroke-width="2"/><line x1="694" y1="1264.3" x2="3217.6" y2="1264.3" stroke="#eef0f6" stroke-width="2"/><line x1="694" y1="1232.1" x2="3217.6" y2="1232.1" stroke="#eef0f6" stroke-width="2"/><line x1="694" y1="1202.2" x2="3217.6" y2="1202.2" stroke="#eef0f6" stroke-width="2"/><line x1="694" y1="1170.9" x2="3217.6" y2="1170.9" stroke="#eef0f6" stroke-width="2"/><line x1="694" y1="1141.0" x2="3217.6" y2="1141.0" stroke="#eef0f6" stroke-width="2"/><line x1="694" y1="1108.8" x2="3217.6" y2="1108.8" stroke="#eef0f6" stroke-width="2"/><line x1="694" y1="1078.9" x2="3217.6" y2="1078.9" stroke="#eef0f6" stroke-width="2"/><line x1="694" y1="1046.6" x2="3217.6" y2="1046.6" stroke="#eef0f6" stroke-width="2"/><line x1="694" y1="1016.7" x2="3217.6" y2="1016.7" stroke="#eef0f6" stroke-width="2"/><line x1="694" y1="982.2" x2="3217.6" y2="982.2" stroke="#eef0f6" stroke-width="2"/></svg>
<div style="position:absolute;top:1411.63px;font-size:23px;line-height:23px;color:#666666;font-weight:400;white-space:nowrap;font-family:'Liberation Sans', sans-serif;letter-spacing:0.5px;right:2792.7px;text-align:right;">180</div>
<div style="position:absolute;top:1380.44px;font-size:23px;line-height:23px;color:#666666;font-weight:400;white-space:nowrap;font-family:'Liberation Sans', sans-serif;letter-spacing:0.5px;right:2792.7px;text-align:right;">190</div>
<div style="position:absolute;top:1349.25px;font-size:23px;line-height:23px;color:#666666;font-weight:400;white-space:nowrap;font-family:'Liberation Sans', sans-serif;letter-spacing:0.5px;right:2792.7px;text-align:right;">200</div>
<div style="position:absolute;top:1318.06px;font-size:23px;line-height:23px;color:#666666;font-weight:400;white-space:nowrap;font-family:'Liberation Sans', sans-serif;letter-spacing:0.5px;right:2792.7px;text-align:right;">210</div>
<div style="position:absolute;top:1286.87px;font-size:23px;line-height:23px;color:#666666;font-weight:400;white-space:nowrap;font-family:'Liberation Sans', sans-serif;letter-spacing:0.5px;right:2792.7px;text-align:right;">220</div>
<div style="position:absolute;top:1255.68px;font-size:23px;line-height:23px;color:#666666;font-weight:400;white-space:nowrap;font-family:'Liberation Sans', sans-serif;letter-spacing:0.5px;right:2792.7px;text-align:right;">230</div>
<div style="position:absolute;top:1224.49px;font-size:23px;line-height:23px;color:#666666;font-weight:400;white-space:nowrap;font-family:'Liberation Sans', sans-serif;letter-spacing:0.5px;right:2792.7px;text-align:right;">240</div>
<div style="position:absolute;top:1193.30px;font-size:23px;line-height:23px;color:#666666;font-weight:400;white-space:nowrap;font-family:'Liberation Sans', sans-serif;letter-spacing:0.5px;right:2792.7px;text-align:right;">250</div>
<div style="position:absolute;top:1162.11px;font-size:23px;line-height:23px;color:#666666;font-weight:400;white-space:nowrap;font-family:'Liberation Sans', sans-serif;letter-spacing:0.5px;right:2792.7px;text-align:right;">260</div>
<div style="position:absolute;top:1130.92px;font-size:23px;line-height:23px;color:#666666;font-weight:400;white-space:nowrap;font-family:'Liberation Sans', sans-serif;letter-spacing:0.5px;right:2792.7px;text-align:right;">270</div>
<div style="position:absolute;top:1099.73px;font-size:23px;line-height:23px;color:#666666;font-weight:400;white-space:nowrap;font-family:'Liberation Sans', sans-serif;letter-spacing:0.5px;right:2792.7px;text-align:right;">280</div>
<div style="position:absolute;top:1068.54px;font-size:23px;line-height:23px;color:#666666;font-weight:400;white-space:nowrap;font-family:'Liberation Sans', sans-serif;letter-spacing:0.5px;right:2792.7px;text-align:right;">290</div>
<div style="position:absolute;top:1037.35px;font-size:23px;line-height:23px;color:#666666;font-weight:400;white-space:nowrap;font-family:'Liberation Sans', sans-serif;letter-spacing:0.5px;right:2792.7px;text-align:right;">300</div>
<div style="position:absolute;top:1006.16px;font-size:23px;line-height:23px;color:#666666;font-weight:400;white-space:nowrap;font-family:'Liberation Sans', sans-serif;letter-spacing:0.5px;right:2792.7px;text-align:right;">310</div>
<div style="position:absolute;top:974.97px;font-size:23px;line-height:23px;color:#666666;font-weight:400;white-space:nowrap;font-family:'Liberation Sans', sans-serif;letter-spacing:0.5px;right:2792.7px;text-align:right;">320</div>
<div style="position:absolute;top:1437.23px;font-size:23px;line-height:23px;color:#666666;font-weight:400;white-space:nowrap;font-family:'Liberation Sans', sans-serif;letter-spacing:0.3px;left:-292.0px;width:2000px;text-align:center;">Dec 18</div>
<div style="position:absolute;top:1437.23px;font-size:23px;line-height:23px;color:#666666;font-weight:400;white-space:nowrap;font-family:'Liberation Sans', sans-serif;letter-spacing:0.3px;left:-139.10000000000002px;width:2000px;text-align:center;">Dec 20</div>
<div style="position:absolute;top:1437.23px;font-size:23px;line-height:23px;color:#666666;font-weight:400;white-space:nowrap;font-family:'Liberation Sans', sans-serif;letter-spacing:0.3px;left:13.799999999999955px;width:2000px;text-align:center;">Dec 22</div>
<div style="position:absolute;top:1437.23px;font-size:23px;line-height:23px;color:#666666;font-weight:400;white-space:nowrap;font-family:'Liberation Sans', sans-serif;letter-spacing:0.3px;left:166.70000000000005px;width:2000px;text-align:center;">Dec 24</div>
<div style="position:absolute;top:1437.23px;font-size:23px;line-height:23px;color:#666666;font-weight:400;white-space:nowrap;font-family:'Liberation Sans', sans-serif;letter-spacing:0.3px;left:319.5999999999999px;width:2000px;text-align:center;">Dec 26</div>
<div style="position:absolute;top:1437.23px;font-size:23px;line-height:23px;color:#666666;font-weight:400;white-space:nowrap;font-family:'Liberation Sans', sans-serif;letter-spacing:0.3px;left:472.5px;width:2000px;text-align:center;">Dec 28</div>
<div style="position:absolute;top:1437.23px;font-size:23px;line-height:23px;color:#666666;font-weight:400;white-space:nowrap;font-family:'Liberation Sans', sans-serif;letter-spacing:0.3px;left:625.4000000000001px;width:2000px;text-align:center;">Dec 30</div>
<div style="position:absolute;top:1437.23px;font-size:23px;line-height:23px;color:#666666;font-weight:400;white-space:nowrap;font-family:'Liberation Sans', sans-serif;letter-spacing:0.3px;left:778.3px;width:2000px;text-align:center;">Jan 01</div>
<div style="position:absolute;top:1437.23px;font-size:23px;line-height:23px;color:#666666;font-weight:400;white-space:nowrap;font-family:'Liberation Sans', sans-serif;letter-spacing:0.3px;left:931.2px;width:2000px;text-align:center;">Jan 03</div>
<div style="position:absolute;top:1437.23px;font-size:23px;line-height:23px;color:#666666;font-weight:400;white-space:nowrap;font-family:'Liberation Sans', sans-serif;letter-spacing:0.3px;left:1084.1000000000004px;width:2000px;text-align:center;">Jan 05</div>
<div style="position:absolute;top:1437.23px;font-size:23px;line-height:23px;color:#666666;font-weight:400;white-space:nowrap;font-family:'Liberation Sans', sans-serif;letter-spacing:0.3px;left:1237.0px;width:2000px;text-align:center;">Jan 07</div>
<div style="position:absolute;top:1437.23px;font-size:23px;line-height:23px;color:#666666;font-weight:400;white-space:nowrap;font-family:'Liberation Sans', sans-serif;letter-spacing:0.3px;left:1389.9px;width:2000px;text-align:center;">Jan 09</div>
<div style="position:absolute;top:1437.23px;font-size:23px;line-height:23px;color:#666666;font-weight:400;white-space:nowrap;font-family:'Liberation Sans', sans-serif;letter-spacing:0.3px;left:1542.8000000000002px;width:2000px;text-align:center;">Jan 11</div>
<div style="position:absolute;top:1437.23px;font-size:23px;line-height:23px;color:#666666;font-weight:400;white-space:nowrap;font-family:'Liberation Sans', sans-serif;letter-spacing:0.3px;left:1695.6999999999998px;width:2000px;text-align:center;">Jan 13</div>
<div style="position:absolute;top:1437.23px;font-size:23px;line-height:23px;color:#666666;font-weight:400;white-space:nowrap;font-family:'Liberation Sans', sans-serif;letter-spacing:0.3px;left:1848.6px;width:2000px;text-align:center;">Jan 15</div>
<div style="position:absolute;top:1437.23px;font-size:23px;line-height:23px;color:#666666;font-weight:400;white-space:nowrap;font-family:'Liberation Sans', sans-serif;letter-spacing:0.3px;left:2001.5px;width:2000px;text-align:center;">Jan 17</div>
<div style="position:absolute;top:1437.23px;font-size:23px;line-height:23px;color:#666666;font-weight:400;white-space:nowrap;font-family:'Liberation Sans', sans-serif;letter-spacing:0.3px;left:2154.4px;width:2000px;text-align:center;">Jan 19</div>
<svg style="position:absolute;left:0;top:0" width="3456" height="1986" viewBox="0 0 3456 1986"><polyline points="808.5,1383.5 885.0,1383.5 961.6,1383.5 1038.1,1383.5 1114.6,1383.5 1191.2,1383.5 1267.7,1383.5 1344.2,1383.5 1420.7,1383.5 1497.3,1383.5 1573.8,1383.5 1650.3,1383.5 1726.9,1383.5 1803.4,1383.5 1879.9,1383.5 1956.5,1383.5 2033.0,1383.5 2109.5,1383.5 2186.0,1383.5 2262.6,1383.5 2339.1,1383.5 2415.6,1383.5 2492.2,1383.5 2568.7,1383.5 2645.2,1383.5 2721.8,1383.5 2798.3,1383.5 2874.8,1383.5 2951.3,1324.7 3027.9,1324.7 3104.4,1324.7" fill="none" stroke="#d04433" stroke-width="4.5" stroke-linejoin="round" stroke-linecap="round"/><polyline points="808.5,1383.5 885.0,1194.6 961.6,1194.6 1038.1,1194.6 1114.6,1176.0 1191.2,1176.0 1267.7,1176.0 1344.2,1176.0 1420.7,1176.0 1497.3,1176.0 1573.8,1176.0 1650.3,1176.0 1726.9,1176.0 1803.4,1176.0 1879.9,1176.0 1956.5,1176.0 2033.0,1157.4 2109.5,1157.4 2186.0,1157.4 2262.6,1157.4 2339.1,1101.7 2415.6,1101.7 2492.2,1083.1 2568.7,1064.5 2645.2,1064.5 2721.8,1064.5 2798.3,1064.5 2874.8,1064.5 2951.3,1036.6 3027.9,1027.3 3104.4,1027.3" fill="none" stroke="#43983a" stroke-width="4.5" stroke-linejoin="round" stroke-linecap="round"/></svg>
<div style="position:absolute;left:1778px;top:1510px;width:32px;height:4px;background:#43983a;"></div>
<div style="position:absolute;top:1499.68px;font-size:24px;line-height:24px;color:#333333;font-weight:700;white-space:nowrap;font-family:'Liberation Sans', sans-serif;left:1820.8px;">Passed</div>
<div style="position:absolute;left:1945.7px;top:1510px;width:32px;height:4px;background:#d04433;"></div>
<div style="position:absolute;top:1499.68px;font-size:24px;line-height:24px;color:#333333;font-weight:700;white-space:nowrap;font-family:'Liberation Sans', sans-serif;letter-spacing:0.2px;left:1989px;">Failed</div>
<div style="position:absolute;top:1674.70px;font-size:28px;line-height:28px;color:#0b0b0d;font-weight:700;white-space:nowrap;font-family:'Liberation Sans', sans-serif;letter-spacing:0.1px;left:602.8px;">Rules that failed most often</div>
<svg style="position:absolute;left:602px;top:1778.0px;overflow:visible" width="50.0" height="50.0" viewBox="0 0 50 50"><defs>
<linearGradient id="cg6021778" x1="0" y1="0" x2="0" y2="1">
<stop offset="0" stop-color="#7fb3e3" stop-opacity="0.2"/><stop offset="0.25" stop-color="#3f86cc"/><stop offset="0.75" stop-color="#3f86cc"/><stop offset="1" stop-color="#7fb3e3" stop-opacity="0.2"/></linearGradient></defs>
<path d="M26.9 0.4 A25.6 23.5 0 0 0 26.9 47.4" fill="none" stroke="url(#cg6021778)" stroke-width="1.9"/><path d="M42.5 13.5 A19.3 19.3 0 1 0 9 32.5" fill="none" stroke="#3f86cc" stroke-width="2" stroke-opacity="0.9"/><text x="11.3" y="29.9" font-family="Liberation Serif, serif" font-weight="700" font-size="17" fill="#1b4a78" letter-spacing="-0.3">CIS</text></svg>
<svg style="position:absolute;left:652px;top:1780.0px" width="44.0" height="44.0" viewBox="0 0 44 44"><circle cx="21.8" cy="21.9" r="20.3" fill="none" stroke="#000" stroke-width="3.1"/>
<path d="M5.8 14.2 Q15 13.6 25 15.6 Q22 19.2 16.5 19.2 Q9.5 19 5.8 14.2 Z" fill="#000"/>
<path d="M13.6 30.4 Q15.5 23.5 20 20.6 Q23 18.6 25 18.9 Q24.5 24 20.5 27.2 Q17 30 13.6 30.4 Z" fill="#000"/>
<path d="M26.4 18.8 Q28.6 19.5 29.2 25 Q29.6 31 29.3 37 Q26.6 33 25.9 27.5 Q25.6 22 26.4 18.8 Z" fill="#000"/>
<path d="M24.5 16.8 L25 13 L27.8 10.4 L30.5 11.2 L31.6 13 L29.6 15.4 L27.6 18.6 Z" fill="#000"/>
<path d="M24.5 13 L23.6 10.5 M31 12 L33.5 11.6" stroke="#000" stroke-width="0.8"/></svg>
<div style="position:absolute;top:1789.30px;font-size:28px;line-height:28px;color:#6b6d85;font-weight:400;white-space:nowrap;font-family:'Liberation Sans', sans-serif;letter-spacing:0.85px;left:745.3px;">Ensure open git branches are up to date before they can be merged into codebase</div>
<div style="position:absolute;top:1789.90px;font-size:28px;line-height:28px;color:#6b6d85;font-weight:400;white-space:nowrap;font-family:'Liberation Sans', sans-serif;letter-spacing:-1.3px;left:1990.7px;">Id: 1.1.10</div>
<div style="position:absolute;left:2132px;top:1776.3px;width:136.5px;height:51.2px;background:#f8e6e6;border-radius:10px;"></div>
<div style="position:absolute;top:1790.79px;font-size:26px;line-height:26px;color:#d04433;font-weight:400;white-space:nowrap;font-family:'Liberation Sans', sans-serif;letter-spacing:-0.25px;left:2140.7px;">240 Failed</div>
<svg style="position:absolute;left:602px;top:1861.7px;overflow:visible" width="50.0" height="50.0" viewBox="0 0 50 50"><defs>
<linearGradient id="cg6021861" x1="0" y1="0" x2="0" y2="1">
<stop offset="0" stop-color="#7fb3e3" stop-opacity="0.2"/><stop offset="0.25" stop-color="#3f86cc"/><stop offset="0.75" stop-color="#3f86cc"/><stop offset="1" stop-color="#7fb3e3" stop-opacity="0.2"/></linearGradient></defs>
<path d="M26.9 0.4 A25.6 23.5 0 0 0 26.9 47.4" fill="none" stroke="url(#cg6021861)" stroke-width="1.9"/><path d="M42.5 13.5 A19.3 19.3 0 1 0 9 32.5" fill="none" stroke="#3f86cc" stroke-width="2" stroke-opacity="0.9"/><text x="11.3" y="29.9" font-family="Liberation Serif, serif" font-weight="700" font-size="17" fill="#1b4a78" letter-spacing="-0.3">CIS</text></svg>
<svg style="position:absolute;left:652px;top:1863.7px" width="44.0" height="44.0" viewBox="0 0 44 44"><circle cx="21.8" cy="21.9" r="20.3" fill="none" stroke="#000" stroke-width="3.1"/>
<path d="M5.8 14.2 Q15 13.6 25 15.6 Q22 19.2 16.5 19.2 Q9.5 19 5.8 14.2 Z" fill="#000"/>
<path d="M13.6 30.4 Q15.5 23.5 20 20.6 Q23 18.6 25 18.9 Q24.5 24 20.5 27.2 Q17 30 13.6 30.4 Z" fill="#000"/>
<path d="M26.4 18.8 Q28.6 19.5 29.2 25 Q29.6 31 29.3 37 Q26.6 33 25.9 27.5 Q25.6 22 26.4 18.8 Z" fill="#000"/>
<path d="M24.5 16.8 L25 13 L27.8 10.4 L30.5 11.2 L31.6 13 L29.6 15.4 L27.6 18.6 Z" fill="#000"/>
<path d="M24.5 13 L23.6 10.5 M31 12 L33.5 11.6" stroke="#000" stroke-width="0.8"/></svg>
<div style="position:absolute;top:1873.00px;font-size:28px;line-height:28px;color:#6b6d85;font-weight:400;white-space:nowrap;font-family:'Liberation Sans', sans-serif;letter-spacing:0.85px;left:745.3px;">Ensure all open comments are resolved before allowing to merge code changes</div>
<div style="position:absolute;top:1873.60px;font-size:28px;line-height:28px;color:#6b6d85;font-weight:400;white-space:nowrap;font-family:'Liberation Sans', sans-serif;letter-spacing:-1.3px;left:1990.7px;">Id: 1.1.11</div>
<div style="position:absolute;left:2132px;top:1860.0px;width:136.5px;height:51.2px;background:#f8e6e6;border-radius:10px;"></div>
<div style="position:absolute;top:1874.49px;font-size:26px;line-height:26px;color:#d04433;font-weight:400;white-space:nowrap;font-family:'Liberation Sans', sans-serif;letter-spacing:-0.25px;left:2140.7px;">240 Failed</div>
<svg style="position:absolute;left:602px;top:1945.4px;overflow:visible" width="50.0" height="50.0" viewBox="0 0 50 50"><defs>
<linearGradient id="cg6021945" x1="0" y1="0" x2="0" y2="1">
<stop offset="0" stop-color="#7fb3e3" stop-opacity="0.2"/><stop offset="0.25" stop-color="#3f86cc"/><stop offset="0.75" stop-color="#3f86cc"/><stop offset="1" stop-color="#7fb3e3" stop-opacity="0.2"/></linearGradient></defs>
<path d="M26.9 0.4 A25.6 23.5 0 0 0 26.9 47.4" fill="none" stroke="url(#cg6021945)" stroke-width="1.9"/><path d="M42.5 13.5 A19.3 19.3 0 1 0 9 32.5" fill="none" stroke="#3f86cc" stroke-width="2" stroke-opacity="0.9"/><text x="11.3" y="29.9" font-family="Liberation Serif, serif" font-weight="700" font-size="17" fill="#1b4a78" letter-spacing="-0.3">CIS</text></svg>
<svg style="position:absolute;left:652px;top:1947.4px" width="44.0" height="44.0" viewBox="0 0 44 44"><circle cx="21.8" cy="21.9" r="20.3" fill="none" stroke="#000" stroke-width="3.1"/>
<path d="M5.8 14.2 Q15 13.6 25 15.6 Q22 19.2 16.5 19.2 Q9.5 19 5.8 14.2 Z" fill="#000"/>
<path d="M13.6 30.4 Q15.5 23.5 20 20.6 Q23 18.6 25 18.9 Q24.5 24 20.5 27.2 Q17 30 13.6 30.4 Z" fill="#000"/>
<path d="M26.4 18.8 Q28.6 19.5 29.2 25 Q29.6 31 29.3 37 Q26.6 33 25.9 27.5 Q25.6 22 26.4 18.8 Z" fill="#000"/>
<path d="M24.5 16.8 L25 13 L27.8 10.4 L30.5 11.2 L31.6 13 L29.6 15.4 L27.6 18.6 Z" fill="#000"/>
<path d="M24.5 13 L23.6 10.5 M31 12 L33.5 11.6" stroke="#000" stroke-width="0.8"/></svg>
<div style="position:absolute;top:1956.70px;font-size:28px;line-height:28px;color:#6b6d85;font-weight:400;white-space:nowrap;font-family:'Liberation Sans', sans-serif;letter-spacing:0.85px;left:745.3px;">Ensure verifying signed commits of new changes before merging</div>
<div style="position:absolute;top:1957.30px;font-size:28px;line-height:28px;color:#6b6d85;font-weight:400;white-space:nowrap;font-family:'Liberation Sans', sans-serif;letter-spacing:-1.3px;left:1990.7px;">Id: 1.1.12</div>
<div style="position:absolute;left:2132px;top:1943.7px;width:136.5px;height:51.2px;background:#f8e6e6;border-radius:10px;"></div>
<div style="position:absolute;top:1958.19px;font-size:26px;line-height:26px;color:#d04433;font-weight:400;white-space:nowrap;font-family:'Liberation Sans', sans-serif;letter-spacing:-0.25px;left:2140.7px;">240 Failed</div>
<div style="position:absolute;top:1674.90px;font-size:28px;line-height:28px;color:#0b0b0d;font-weight:700;white-space:nowrap;font-family:'Liberation Sans', sans-serif;left:2426px;">Evalutions by type</div>
<svg style="position:absolute;left:2426px;top:1779px;" width="32" height="32" viewBox="0 0 32 32"><g fill="none" stroke="#5f6380" stroke-width="1.8"><ellipse cx="15.8" cy="6.8" rx="11.9" ry="2.9"/><path d="M3.9 6.8 L5.8 25 Q15.8 29.5 25.8 25 L27.7 6.8"/><path d="M12.2 13.6 L9.3 16.6 L12.2 19.6 M19.6 13.6 L22.5 16.6 L19.6 19.6 M16.6 12.8 L15.2 20.6" stroke-linecap="round"/></g></svg>
<div style="position:absolute;top:1781.39px;font-size:26px;line-height:26px;color:#22222a;font-weight:400;white-space:nowrap;font-family:'Liberation Sans', sans-serif;letter-spacing:-0.4px;left:2466.8px;">Code Repository</div>
<div style="position:absolute;top:1781.39px;font-size:26px;line-height:26px;color:#22222a;font-weight:400;white-space:nowrap;font-family:'Liberation Sans', sans-serif;letter-spacing:-0.7px;right:219px;text-align:right;">10 / 10 Failed</div>
<div style="position:absolute;left:2425.7px;top:1828px;width:812.3px;height:15.5px;background:#d04433;"></div>
<svg style="position:absolute;left:2424px;top:1914px;" width="36" height="24" viewBox="0 0 36 24"><path d="M15 13.8 A6.3 6.3 0 1 1 13.6 6.2 L21.2 13.8 A6.3 6.3 0 1 0 20.3 7.6" fill="none" stroke="#5f6380" stroke-width="2.2" stroke-linecap="round" transform="translate(1 0)"/></svg>
<div style="position:absolute;top:1911.99px;font-size:26px;line-height:26px;color:#22222a;font-weight:400;white-space:nowrap;font-family:'Liberation Sans', sans-serif;letter-spacing:-0.9px;left:2466.8px;">CI/CD</div>
<div style="position:absolute;top:1911.99px;font-size:26px;line-height:26px;color:#22222a;font-weight:400;white-space:nowrap;font-family:'Liberation Sans', sans-serif;letter-spacing:-0.2px;right:219px;text-align:right;">4 / 66 Failed</div>
<div style="position:absolute;left:2425.7px;top:1960px;width:812.3px;height:15.5px;background:#6cc65f;"></div>
<div style="position:absolute;left:2425.7px;top:1960px;width:48.9px;height:15.5px;background:#d04433;"></div>
<svg style="position:absolute;left:3380px;top:1860px;" width="76" height="76" viewBox="0 0 76 76"><g fill="none" stroke="#5f6380" stroke-width="2.8" stroke-linejoin="round" stroke-linecap="round"><path d="M26.6 32.6 A14 14 0 1 1 53.4 40.5 L54.3 47.2 L46 46.7 Q44 47 42 48"/><path d="M19.7 54.6 L21 46 A9.6 9.6 0 1 1 26.2 52.8 Z"/></g></svg>
<div style="position:absolute;left:0px;top:0px;width:3456px;height:2px;background:#444746;"></div>
</div></body></html>
